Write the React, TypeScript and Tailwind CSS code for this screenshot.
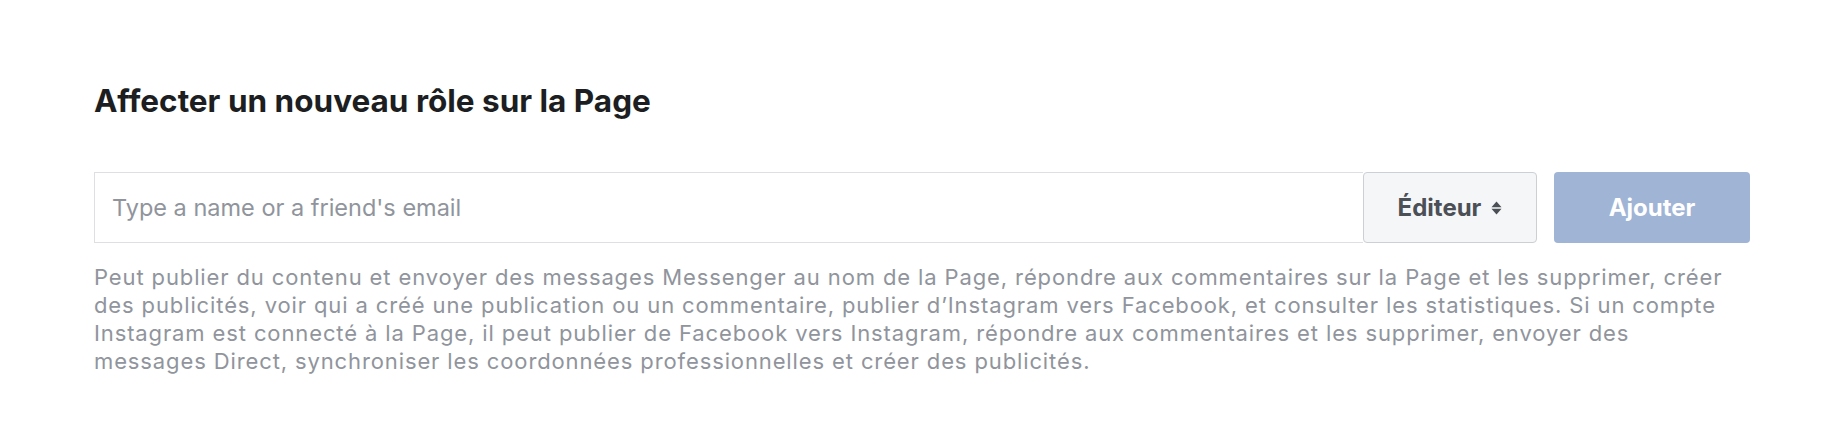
const PH = "Type a name or a friend's email";

function SortArrows() {
  return (
    <svg width="11" height="14" viewBox="0 0 11 14" className="shrink-0 fill-[#4b4f56]">
      <path d="M5.5 0.5 L10.5 6.2 H0.5 Z" />
      <path d="M5.5 13.5 L10.5 7.8 H0.5 Z" />
    </svg>
  );
}

export default function App() {
  return (
    <div className="min-h-[430px] bg-white pl-[94px] pr-[90px] pt-[84px] font-['Inter',sans-serif]">
      <h2 className="text-[31.5px] font-bold leading-[34px] text-[#1c1e21]">Affecter un nouveau rôle sur la Page</h2>

      {/* role picker row */}
      <div className="mt-[54px] flex h-[71px] items-stretch">
        <div className="flex flex-1 items-center border border-r-0 border-[#dddfe2] bg-white pl-[17px]">
          <input
            className="w-full bg-transparent text-[23.5px] text-[#1c1e21] outline-none placeholder:text-[#90949c]"
            placeholder={PH}
          />
        </div>
        <button className="flex w-[174px] items-center justify-center gap-[10px] rounded-[4px] border border-[#ccd0d5] bg-[#f5f6f7] text-[24px] font-bold text-[#4b4f56]">
          Éditeur
          <SortArrows />
        </button>
        <button className="ml-[17px] w-[196px] rounded-[4px] bg-[#a0b4d5] text-[24px] font-bold text-white">
          Ajouter
        </button>
      </div>

      <p className="mt-[20px] max-w-[1636px] text-[22px] leading-[28px] tracking-[0.88px] text-[#90949c]">
        Peut publier du contenu et envoyer des messages Messenger au nom de la Page, répondre aux commentaires sur la
        Page et les supprimer, créer des publicités, voir qui a créé une publication ou un commentaire, publier
        d’Instagram vers Facebook, et consulter les statistiques. Si un compte Instagram est connecté à la Page, il peut
        publier de Facebook vers Instagram, répondre aux commentaires et les supprimer, envoyer des messages Direct,
        synchroniser les coordonnées professionnelles et créer des publicités.
      </p>
    </div>
  );
}
